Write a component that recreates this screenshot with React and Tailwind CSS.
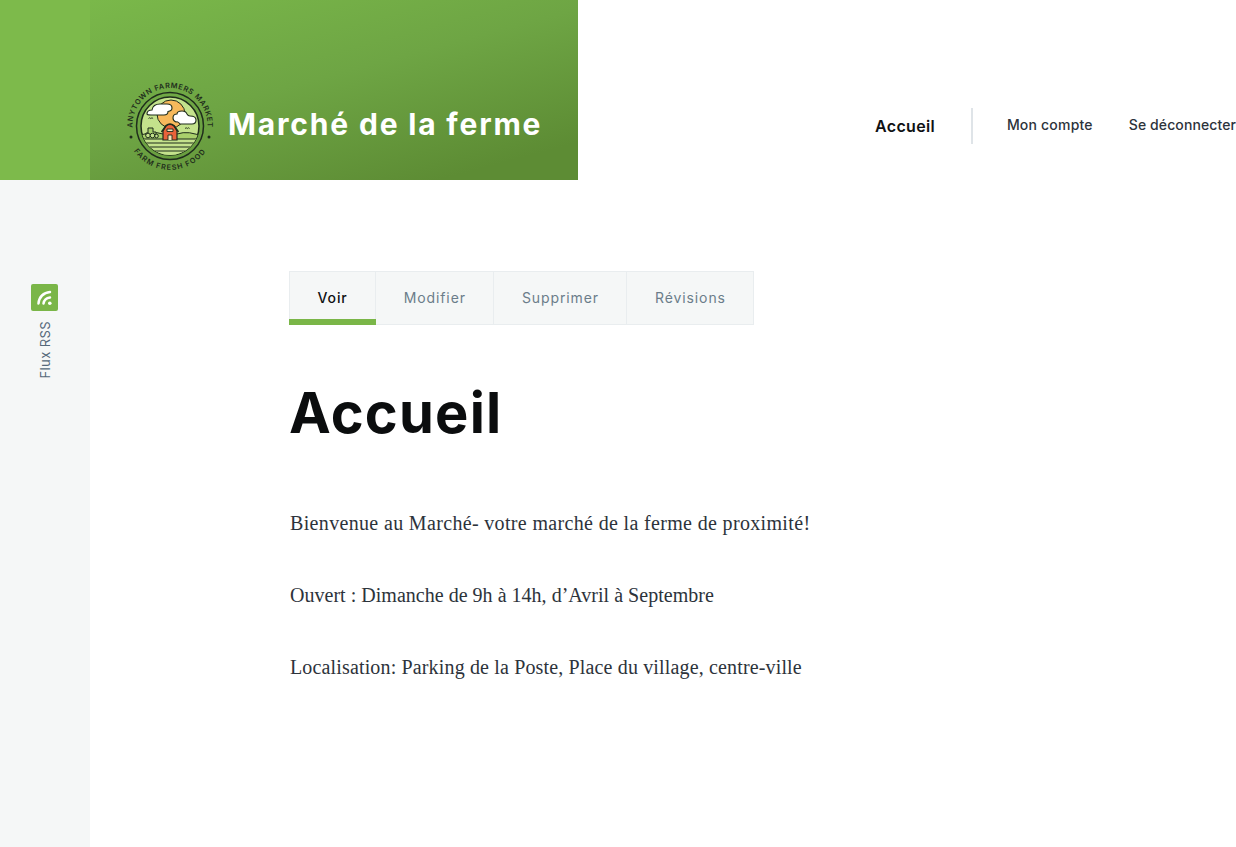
import React from 'react';

const INK = '#1f2d1c';

const Logo = () => (
  <svg width="88" height="92" viewBox="0 0 88 92" className="shrink-0 overflow-visible">
    <defs>
      <path id="arcTop" d="M 8 58 A 37.500 37.500 0 1 1 78 58" />
      <path id="arcBottom" d="M 2.900 63 A 44 44 0 0 0 83.100 63" />
      <clipPath id="inner"><circle cx="43" cy="45" r="29" /></clipPath>
    </defs>
    <text fontFamily="Inter, sans-serif" fontSize="7.300" fontWeight="600" fill={INK} letterSpacing="0.6">
      <textPath href="#arcTop" startOffset="50%" textAnchor="middle">ANYTOWN FARMERS MARKET</textPath>
    </text>
    <text fontFamily="Inter, sans-serif" fontSize="7.300" fontWeight="600" fill={INK} letterSpacing="1.05">
      <textPath href="#arcBottom" startOffset="50%" textAnchor="middle">FARM FRESH FOOD</textPath>
    </text>
    <circle cx="4" cy="56" r="1.500" fill={INK} />
    <circle cx="82" cy="56" r="1.500" fill={INK} />
    <circle cx="43" cy="45" r="33.500" fill="none" stroke={INK} strokeWidth="1.500" />
    <circle cx="43" cy="45" r="29" fill="#c4e28c" stroke={INK} strokeWidth="1.500" />
    <g clipPath="url(#inner)">
      <circle cx="44" cy="33" r="14" fill="#f7b95c" stroke={INK} strokeWidth="1" />
      <path d="M10 56 Q24 49 36 53 L43 59 L50 53 Q62 49 76 56 V80 H10 Z" fill="#a9d06c" stroke={INK} strokeWidth="1" />
      <path d="M10 58 H76 V80 H10 Z" fill="#c4e28c" />
      <path d="M10 58 H76 M10 62 H76 M10 66 H76 M10 70 H76" stroke={INK} strokeWidth="1.100" fill="none" />
    </g>
    <path d="M20 33 q0 -4 5 -4 q1 -6 8 -6 h7 q5 0 5 4 q0 3 -4 3.500 q0 3.500 -4 3.500 h-13 q-4 0 -4 -1 z" fill="#fff" stroke={INK} strokeWidth="1.100" />
    <path d="M46 37 q0 -4 4 -4 q0 -3 5 -3 q4 0 5 3 q1 2 3 2 q6 0 6 4 q0 4 -4 4 h-12 q-2 -3 -4 -2 q-3 -1 -3 -4 z" fill="#fff" stroke={INK} strokeWidth="1.100" />
    <path d="M36 59 V50 L39 45 Q43 42 47 45 L50 50 V59 Z" fill="#e8623a" stroke={INK} strokeWidth="1.200" />
    <path d="M34.500 51 L39 44.500 Q43 41.500 47 44.500 L51.500 51" fill="none" stroke={INK} strokeWidth="1.500" />
    <path d="M40 48 H46 V50.500 H40 Z M41 59 V54 H45 V59" fill="#f6e2b8" stroke={INK} strokeWidth="0.900" />
    <path d="M19 55 v-3 h2 v-5 h5 v4 h3 v4 z" fill="#a9d06c" stroke={INK} strokeWidth="1" />
    <circle cx="21" cy="54.500" r="2.300" fill="#c4e28c" stroke={INK} strokeWidth="1" />
    <circle cx="25.500" cy="54.500" r="2.300" fill="#c4e28c" stroke={INK} strokeWidth="1" />
    <circle cx="29.500" cy="55" r="1.800" fill="#c4e28c" stroke={INK} strokeWidth="1" />
    <path d="M21.500 37.500 q1.200 -1.500 2.300 0 q1.200 -1.500 2.300 0 M58 47.500 q1.200 -1.500 2.300 0 q1.200 -1.500 2.300 0" fill="none" stroke={INK} strokeWidth="0.900" />
  </svg>
);

const Tab = ({ label, active }) => (
  <a
    href="#"
    className={`relative block h-full border-r border-[#e9edef] px-[27.5px] pt-[17px] text-[14px] leading-[18px] tracking-[0.9px] last:border-r-0 ${active ? 'font-medium text-[#0f1113]' : 'text-[#6b7d8a]'}`}
  >
    {label}
    {active && <span className="absolute -bottom-px -left-px -right-px h-[6px] bg-[#7ab648]" />}
  </a>
);

const App = () => {
  return (
    <div className="flex min-h-[847px] flex-col bg-white font-['Inter',sans-serif]">
      <header className="flex h-[180px] shrink-0">
        <div className="w-[90px] bg-[#7dba4b]" />
        <div className="flex w-[488px] items-end bg-[linear-gradient(165deg,#7ab84a_0%,#6ea544_45%,#5d8c34_88%)] pb-[7px] pl-[37px]">
          <Logo />
          <h1 className="mb-[31px] ml-[13px] whitespace-nowrap text-[30px] font-bold leading-[36px] tracking-[1.82px] text-white">Marché de la ferme</h1>
        </div>
        <nav className="flex flex-1 items-start justify-end pt-[108px]">
          <a href="#" className="mt-[8px] text-[16px] font-semibold leading-[20px] tracking-[0.3px] text-[#0f1113]">Accueil</a>
          <div className="ml-[36px] h-[36px] w-[2px] bg-[#dfe4e8]" />
          <a href="#" className="ml-[34px] mt-[8px] text-[14px] font-medium leading-[18px] tracking-[0.2px] text-[#2d333b]">Mon compte</a>
          <a href="#" className="ml-[36px] mt-[8px] text-[14px] font-medium leading-[18px] tracking-[0.1px] text-[#2d333b]">Se déconnecter</a>
        </nav>
      </header>
      <div className="flex flex-1">
        <aside className="flex w-[90px] shrink-0 flex-col items-center bg-[#f5f7f7] pr-px pt-[104px]">
          <div className="rounded-[2px] bg-[#7ab648]">
            <svg width="27" height="27" viewBox="0 0 27 27" fill="none" stroke="#fff" strokeLinecap="round" className="block">
              <path d="M7.500 19.500 C8 13 12.500 8.500 19 8" strokeWidth="2.500" />
              <path d="M12.500 19.500 C13 16.500 15.500 14 19 13.500" strokeWidth="2.500" />
              <circle cx="18.800" cy="19.300" r="1.800" fill="#fff" stroke="none" />
            </svg>
          </div>
          <span className="mt-[10px] rotate-180 text-[13px] leading-[14px] tracking-[0.4px] text-[#55697a] [writing-mode:vertical-rl]">Flux RSS</span>
        </aside>
        <main className="flex-1 pl-[199px] pt-[91px]">
          <div className="flex h-[54px] w-fit border border-[#e9edef] bg-[#f5f7f7]">
            <Tab label="Voir" active />
            <Tab label="Modifier" />
            <Tab label="Supprimer" />
            <Tab label="Révisions" />
          </div>
          <h2 className="mt-[52px] text-[56px] font-bold leading-[72px] tracking-[1.2px] text-[#0b0d0e]">Accueil</h2>
          <div className="mt-[59px] pl-px font-['Liberation_Serif',serif] text-[20px] leading-[30px] text-[#2d333b]">
            <p className="tracking-[0.34px]">Bienvenue au Marché- votre marché de la ferme de proximité!</p>
            <p className="mt-[42px] tracking-[0.02px]">Ouvert : Dimanche de 9h à 14h, d’Avril à Septembre</p>
            <p className="mt-[42px] tracking-[0.15px]">Localisation: Parking de la Poste, Place du village, centre-ville</p>
          </div>
        </main>
      </div>
    </div>
  );
};

export default App;
